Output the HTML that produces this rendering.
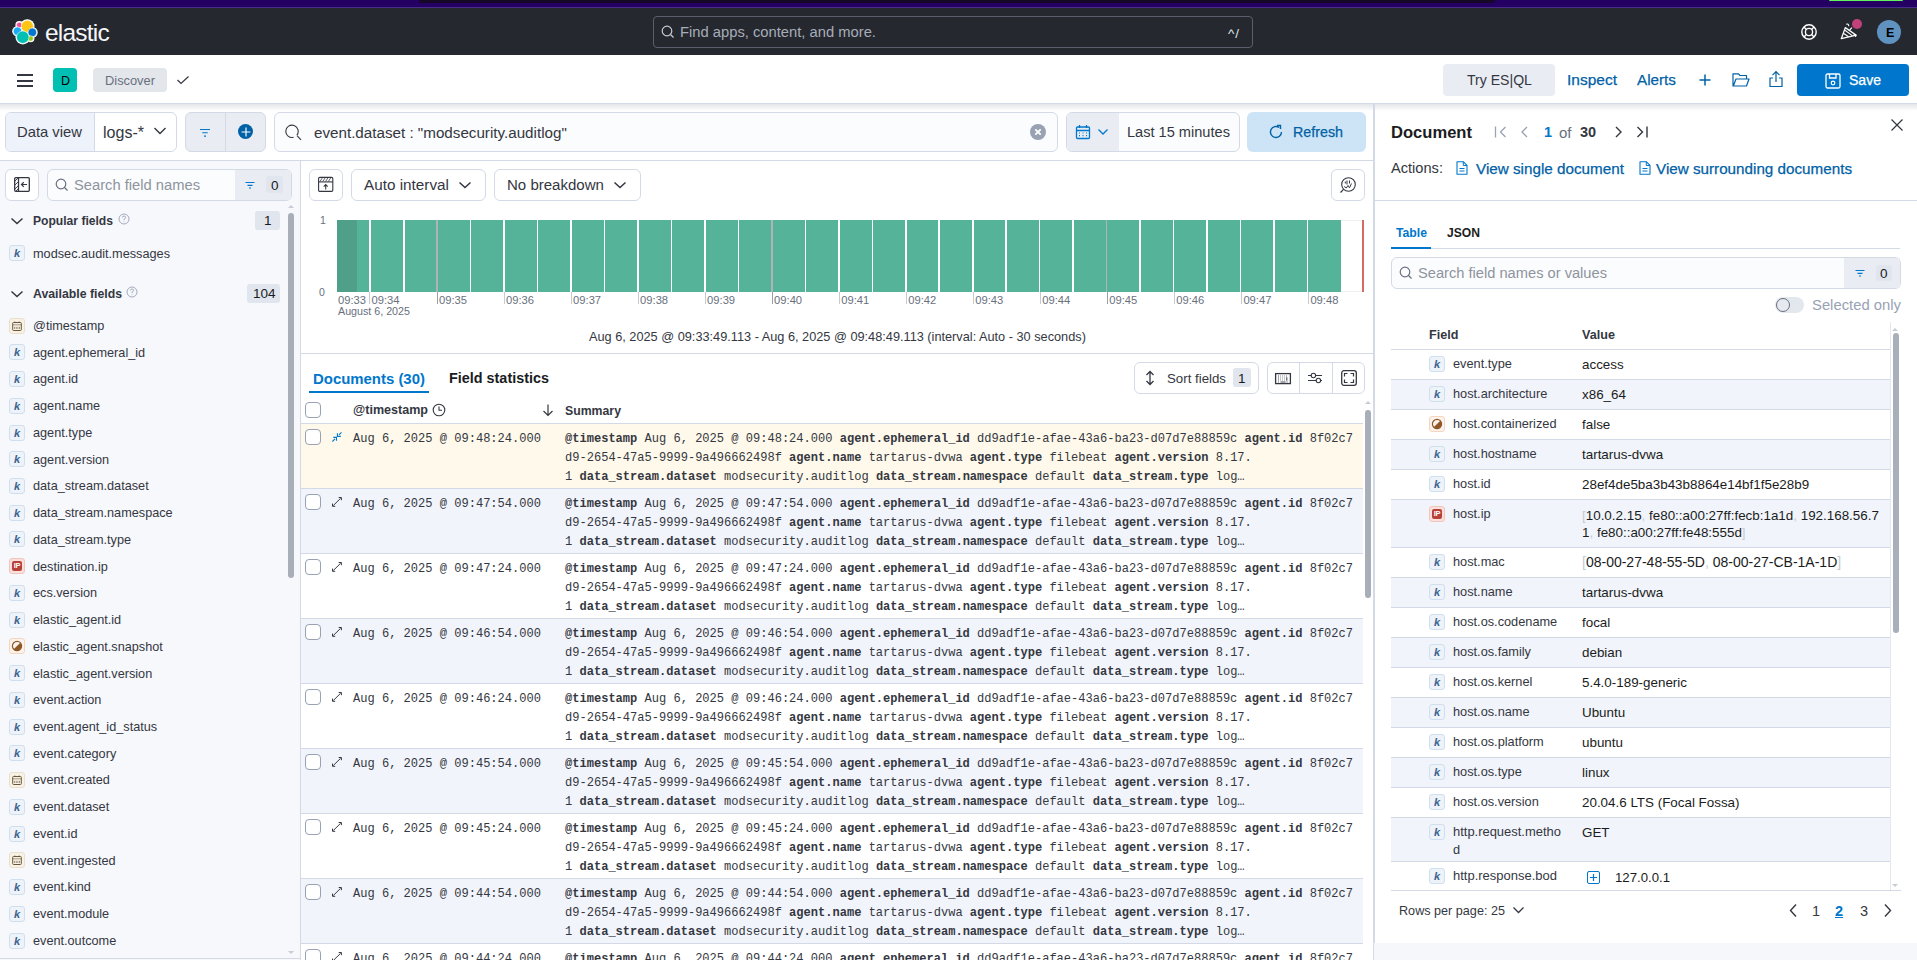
<!DOCTYPE html><html><head><meta charset="utf-8"><style>
html,body{margin:0;padding:0;width:1917px;height:960px;overflow:hidden;background:#fff;font-family:"Liberation Sans",sans-serif;}
.a{position:absolute;box-sizing:border-box;}
.t{position:absolute;white-space:pre;}
.m{font-family:"Liberation Mono",monospace;}
</style></head><body>
<div class="a" style="left:0px;top:0px;width:1917px;height:8px;background:#230062;"></div>
<div class="a" style="left:0px;top:7px;width:1917px;height:1px;background:#4a2c8c;"></div>
<div class="a" style="left:419px;top:0px;width:1076px;height:3px;background:#160827;border-radius:0 0 6px 6px;"></div>
<div class="a" style="left:1829px;top:0px;width:74px;height:1.2px;background:#5ff25c;border-radius:0 0 2px 2px;"></div>
<div class="a" style="left:0px;top:8px;width:1917px;height:47px;background:#25282f;"></div>
<svg class="a" style="left:10px;top:17px;" width="30" height="30" viewBox="0 0 30 30" fill="none"><circle cx="9.3" cy="8.0" r="3.9" fill="#fff"/><circle cx="17.3" cy="9.4" r="7.199999999999999" fill="#fff"/><circle cx="7.5" cy="14.2" r="5.300000000000001" fill="#fff"/><circle cx="22.3" cy="15.4" r="5.4" fill="#fff"/><circle cx="20.6" cy="21.5" r="3.8000000000000003" fill="#fff"/><circle cx="12.8" cy="20.2" r="7.300000000000001" fill="#fff"/><circle cx="9.3" cy="8.0" r="2.8" fill="#f04e98" stroke="#fff" stroke-width="0.6"/><circle cx="17.3" cy="9.4" r="6.1" fill="#fec514" stroke="#fff" stroke-width="0.6"/><circle cx="7.5" cy="14.2" r="4.2" fill="#1ba9f5" stroke="#fff" stroke-width="0.6"/><circle cx="22.3" cy="15.4" r="4.3" fill="#0077cc" stroke="#fff" stroke-width="0.6"/><circle cx="20.6" cy="21.5" r="2.7" fill="#93c90e" stroke="#fff" stroke-width="0.6"/><circle cx="12.8" cy="20.2" r="6.2" fill="#00bfb3" stroke="#fff" stroke-width="0.6"/></svg>
<div class="t " style="left:45px;top:18.3px;font-size:24.5px;line-height:29.4px;color:#f5f7fa;letter-spacing:-0.8px;">elastic</div>
<div class="a" style="left:653px;top:16px;width:600px;height:32px;border:1px solid #5a5f6b;border-radius:4px;background:#25282f;"></div>
<svg class="a" style="left:661px;top:25px;" width="14" height="14" viewBox="0 0 14 14" fill="none"><circle cx="6" cy="6" r="4.8" stroke="#c7ccd6" stroke-width="1.2"/><path d="M9.5 9.5L12.5 12.5" stroke="#c7ccd6" stroke-width="1.2"/></svg>
<div class="t " style="left:680px;top:24.15px;font-size:14.75px;line-height:17.7px;color:#a7adb8;">Find apps, content, and more.</div>
<div class="t " style="left:1228px;top:25.9px;font-size:13.5px;line-height:16.2px;color:#dfe3ea;letter-spacing:1px;">^/</div>
<svg class="a" style="left:1800px;top:23px;" width="18" height="18" viewBox="0 0 18 18" fill="none"><circle cx="9" cy="9" r="7.2" stroke="#fff" stroke-width="1.4"/><circle cx="9" cy="9" r="3.6" stroke="#fff" stroke-width="1.4"/><path d="M4 4L6.4 6.4M14 4L11.6 6.4M4 14L6.4 11.6M14 14L11.6 11.6" stroke="#fff" stroke-width="1.4"/></svg>
<svg class="a" style="left:1838px;top:20px;" width="22" height="22" viewBox="0 0 22 22" fill="none"><path d="M3.3 18.7L7.3 7.6L18.3 15.2Z" stroke="#fff" stroke-width="1.3" stroke-linejoin="round"/><path d="M5.4 13.2L10.6 16.8M6.6 10L14.3 15.6" stroke="#fff" stroke-width="1.1"/><path d="M8.2 4.2Q10.6 3.4 10.8 6.2M15.5 14.2Q18.2 14 17.6 17M11.6 10L14 7.6" stroke="#fff" stroke-width="1.1"/></svg>
<div class="a" style="left:1851.7px;top:18.7px;width:10.6px;height:10.6px;background:#c2417b;border-radius:50%;"></div>
<div class="a" style="left:1877px;top:20px;width:24px;height:24px;background:#6092c0;border-radius:50%;"></div>
<div class="t " style="left:1886px;top:25.5px;font-size:12.5px;line-height:15.0px;color:#000;font-weight:700;font-weight:600;">E</div>
<div class="a" style="left:0px;top:55px;width:1917px;height:49px;background:#fff;border-bottom:1px solid #d3dae6;"></div>
<div class="a" style="left:0px;top:104px;width:1917px;height:7px;background:linear-gradient(#e3e5e9,rgba(255,255,255,0));"></div>
<div class="a" style="left:17px;top:74px;width:16px;height:1.6px;background:#343741;"></div>
<div class="a" style="left:17px;top:80px;width:16px;height:1.6px;background:#343741;"></div>
<div class="a" style="left:17px;top:85px;width:16px;height:1.6px;background:#343741;"></div>
<div class="a" style="left:53px;top:68px;width:24px;height:24px;background:#00bfb3;border-radius:4px;"></div>
<div class="t " style="left:61px;top:73.5px;font-size:12.5px;line-height:15.0px;color:#000;">D</div>
<div class="a" style="left:93px;top:68px;width:74px;height:24px;background:#e3e6eb;border-radius:4px;"></div>
<div class="t " style="left:105px;top:73.29px;font-size:12.85px;line-height:15.42px;color:#69707d;">Discover</div>
<svg class="a" style="left:176px;top:75px;" width="14" height="10" viewBox="0 0 14 10" fill="none"><path d="M1.5 5L5 8.5L12.5 1.5" stroke="#343741" stroke-width="1.2"/></svg>
<div class="a" style="left:1443px;top:64px;width:112px;height:32px;background:#e9edf3;border-radius:4px;"></div>
<div class="t " style="left:1467px;top:71.75px;font-size:14.09px;line-height:16.91px;color:#343741;">Try ES|QL</div>
<div class="t " style="left:1567px;top:70.9px;font-size:15.51px;line-height:18.61px;color:#0061a6;-webkit-text-stroke:0.25px currentColor;">Inspect</div>
<div class="t " style="left:1637px;top:71.05px;font-size:15.26px;line-height:18.31px;color:#0061a6;-webkit-text-stroke:0.25px currentColor;">Alerts</div>
<svg class="a" style="left:1698px;top:73px;" width="14" height="14" viewBox="0 0 14 14" fill="none"><path d="M7 1.5V12.5M1.5 7H12.5" stroke="#0061a6" stroke-width="1.5"/></svg>
<svg class="a" style="left:1732px;top:72px;" width="18" height="16" viewBox="0 0 18 16" fill="none"><path d="M1 3.5V14H14.5L17 7H4L1.5 13.5M1 3.5V1.8H6.5L8 3.5H14.5V7" stroke="#0061a6" stroke-width="1.2" stroke-linejoin="round"/></svg>
<svg class="a" style="left:1768px;top:70px;" width="16" height="18" viewBox="0 0 16 18" fill="none"><path d="M8 12V2M4.5 5.2L8 1.6L11.5 5.2M5 8H2V16.5H14V8H11" stroke="#0061a6" stroke-width="1.2"/></svg>
<div class="a" style="left:1797px;top:64px;width:112px;height:32px;background:#0077cc;border-radius:4px;"></div>
<svg class="a" style="left:1825px;top:73px;" width="16" height="16" viewBox="0 0 16 16" fill="none"><rect x="1" y="1" width="14" height="14" rx="1.5" stroke="#fff" stroke-width="1.3"/><path d="M4.5 1V5H11V1" stroke="#fff" stroke-width="1.3"/><circle cx="8" cy="10" r="1.8" stroke="#fff" stroke-width="1.2"/></svg>
<div class="t " style="left:1849px;top:71.78px;font-size:14.04px;line-height:16.85px;color:#fff;-webkit-text-stroke:0.25px currentColor;">Save</div>
<div class="a" style="left:0px;top:104px;width:1917px;height:57px;background:transparent;"></div>
<div class="a" style="left:5px;top:112px;width:172px;height:40px;border:1px solid #d3dae6;border-radius:6px;background:#fff;overflow:hidden;"></div>
<div class="a" style="left:6px;top:113px;width:89px;height:38px;background:#eef2fa;border-right:1px solid #d3dae6;border-radius:5px 0 0 5px;"></div>
<div class="t " style="left:17px;top:124.12px;font-size:14.8px;line-height:17.76px;color:#343741;">Data view</div>
<div class="t " style="left:103px;top:123.38px;font-size:16.04px;line-height:19.25px;color:#343741;">logs-*</div>
<svg class="a" style="left:153px;top:126px;" width="14" height="10" viewBox="0 0 14 10" fill="none"><path d="M1.5 2L7 7.5L12.5 2" stroke="#343741" stroke-width="1.4"/></svg>
<div class="a" style="left:185px;top:112px;width:81px;height:40px;border:1px solid #d3dae6;border-radius:6px;background:#e9edf3;"></div>
<div class="a" style="left:225px;top:113px;width:1px;height:38px;background:#d3dae6;"></div>
<svg class="a" style="left:198px;top:124px;" width="14" height="16" viewBox="0 0 14 16" fill="none"><path d="M2 5.5H12M4.3 8.8H9.7M6 12.1H8" stroke="#0077cc" stroke-width="1.1"/></svg>
<div class="a" style="left:238px;top:124px;width:15px;height:15px;background:#0061a6;border-radius:50%;"></div>
<svg class="a" style="left:237.5px;top:123.5px;" width="16" height="16" viewBox="0 0 16 16" fill="none"><path d="M8 3.6V12.4M3.6 8H12.4" stroke="#fff" stroke-width="1.15"/></svg>
<div class="a" style="left:274px;top:112px;width:784px;height:40px;border:1px solid #d3dae6;border-radius:6px;background:#fbfcfd;"></div>
<svg class="a" style="left:285px;top:124px;" width="18" height="18" viewBox="0 0 18 18" fill="none"><path d="M11.9 11.1A6.2 6.2 0 1 0 8.6 13.3" stroke="#343741" stroke-width="1.1"/><path d="M12 11.7L16 15.8" stroke="#343741" stroke-width="1.1"/></svg>
<div class="t " style="left:314px;top:123.88px;font-size:15.2px;line-height:18.24px;color:#343741;">event.dataset : &quot;modsecurity.auditlog&quot;</div>
<div class="a" style="left:1030px;top:124px;width:16px;height:16px;background:#98a2b3;border-radius:50%;"></div>
<svg class="a" style="left:1030px;top:124px;" width="16" height="16" viewBox="0 0 16 16" fill="none"><path d="M5.3 5.3L10.7 10.7M10.7 5.3L5.3 10.7" stroke="#fff" stroke-width="1.8"/></svg>
<div class="a" style="left:1066px;top:112px;width:174px;height:40px;border:1px solid #d3dae6;border-radius:6px;background:#fbfcfd;overflow:hidden;"></div>
<div class="a" style="left:1067px;top:113px;width:52px;height:38px;background:#e9edf3;border-radius:5px 0 0 5px;"></div>
<svg class="a" style="left:1075px;top:124px;" width="16" height="16" viewBox="0 0 16 16" fill="none"><rect x="1.5" y="3" width="13" height="11.5" rx="1" stroke="#0077cc" stroke-width="1.3"/><path d="M1.5 6.5H14.5M4.5 1V4M11.5 1V4" stroke="#0077cc" stroke-width="1.3"/><path d="M4 9H5M7.5 9H8.5M11 9H12M4 11.7H5M7.5 11.7H8.5M11 11.7H12" stroke="#0077cc" stroke-width="1.2"/></svg>
<svg class="a" style="left:1097px;top:128px;" width="12" height="8" viewBox="0 0 12 8" fill="none"><path d="M1.5 1.5L6 6L10.5 1.5" stroke="#0077cc" stroke-width="1.3"/></svg>
<div class="t " style="left:1127px;top:124.25px;font-size:14.59px;line-height:17.51px;color:#343741;">Last 15 minutes</div>
<div class="a" style="left:1247px;top:112px;width:119px;height:40px;background:#cce4f5;border-radius:6px;"></div>
<svg class="a" style="left:1268px;top:124px;" width="16" height="16" viewBox="0 0 16 16" fill="none"><path d="M13.5 8A5.5 5.5 0 1 1 11.2 3.5" stroke="#0061a6" stroke-width="1.4"/><path d="M9 1.5H12.5V5" stroke="#0061a6" stroke-width="1.4"/></svg>
<div class="t " style="left:1293px;top:124.43px;font-size:14.28px;line-height:17.14px;color:#0061a6;-webkit-text-stroke:0.25px currentColor;">Refresh</div>
<div class="a" style="left:0px;top:160px;width:1374px;height:1px;background:#d3dae6;"></div>
<div class="a" style="left:0px;top:161px;width:300px;height:799px;background:#f7f8fc;"></div>
<div class="a" style="left:300px;top:161px;width:1px;height:799px;background:#d3dae6;"></div>
<div class="a" style="left:0px;top:958px;width:300px;height:1px;background:#d3dae6;"></div>
<div class="a" style="left:5px;top:169px;width:34px;height:32px;border:1px solid #d3dae6;border-radius:6px;background:#fff;"></div>
<svg class="a" style="left:14px;top:177px;" width="16" height="15" viewBox="0 0 16 15" fill="none"><rect x="0.7" y="0.7" width="14.6" height="13.6" rx="1" stroke="#343741" stroke-width="1.3"/><path d="M4.5 1V14" stroke="#343741" stroke-width="1.3"/><path d="M1 4L4 1M1 8L4.5 4.5M1 12L4.5 8.5M2 14L4.5 11.5" stroke="#343741" stroke-width="0.9"/><path d="M13 7.5H7.5M9.8 5.2L7.5 7.5L9.8 9.8" stroke="#343741" stroke-width="1.2"/></svg>
<div class="a" style="left:47px;top:169px;width:245px;height:32px;border:1px solid #d3dae6;border-radius:6px;background:#fbfcfd;overflow:hidden;"></div>
<div class="a" style="left:235px;top:170px;width:56px;height:30px;background:#e9edf3;"></div>
<svg class="a" style="left:55px;top:178px;" width="14" height="14" viewBox="0 0 14 14" fill="none"><circle cx="6" cy="6" r="4.8" stroke="#69707d" stroke-width="1.2"/><path d="M9.5 9.5L12.5 12.5" stroke="#69707d" stroke-width="1.2"/></svg>
<div class="t " style="left:74px;top:177.17px;font-size:14.72px;line-height:17.66px;color:#8e949e;">Search field names</div>
<svg class="a" style="left:244px;top:179px;" width="12" height="12" viewBox="0 0 12 12" fill="none"><path d="M1.5 3.5H10.5M3.5 6.3H8.5M5 9H7" stroke="#0077cc" stroke-width="1.2"/></svg>
<div class="a" style="left:266px;top:176px;width:17px;height:17px;background:#e0e5ee;border-radius:3px;"></div>
<div class="t " style="left:271px;top:177.9px;font-size:13.5px;line-height:16.2px;color:#1a1c21;">0</div>
<svg class="a" style="left:285px;top:202px;" width="12" height="8" viewBox="0 0 12 8" fill="none"><path d="M3 6L6 3L9 6Z" fill="#c7cdd6"/></svg>
<div class="a" style="left:288px;top:213px;width:6px;height:365px;background:#a9afb9;border-radius:3px;"></div>
<svg class="a" style="left:285px;top:949px;" width="12" height="8" viewBox="0 0 12 8" fill="none"><path d="M3 2L6 5L9 2Z" fill="#c7cdd6"/></svg>
<svg class="a" style="left:10px;top:217px;" width="14" height="8" viewBox="0 0 14 8" fill="none"><path d="M1.5 1.5L7 6.5L12.5 1.5" stroke="#343741" stroke-width="1.5"/></svg>
<div class="t " style="left:33px;top:213.74px;font-size:12.1px;line-height:14.52px;color:#343741;font-weight:700;">Popular fields</div>
<svg class="a" style="left:118px;top:213px;" width="12" height="12" viewBox="0 0 12 12" fill="none"><circle cx="6" cy="6" r="5" stroke="#98a2b3" stroke-width="0.9"/><path d="M4.4 4.6Q4.6 3 6 3Q7.6 3 7.6 4.5Q7.6 5.4 6 6.2V7.3M6 8.6V9.2" stroke="#98a2b3" stroke-width="0.9"/></svg>
<div class="a" style="left:255px;top:211px;width:25px;height:19px;background:#e0e5ee;border-radius:3px;"></div>
<div class="t " style="left:264px;top:212.9px;font-size:13.5px;line-height:16.2px;color:#1a1c21;">1</div>
<svg class="a" style="left:10px;top:290px;" width="14" height="8" viewBox="0 0 14 8" fill="none"><path d="M1.5 1.5L7 6.5L12.5 1.5" stroke="#343741" stroke-width="1.5"/></svg>
<div class="t " style="left:33px;top:286.62px;font-size:12.29px;line-height:14.75px;color:#343741;font-weight:700;">Available fields</div>
<svg class="a" style="left:126px;top:286px;" width="12" height="12" viewBox="0 0 12 12" fill="none"><circle cx="6" cy="6" r="5" stroke="#98a2b3" stroke-width="0.9"/><path d="M4.4 4.6Q4.6 3 6 3Q7.6 3 7.6 4.5Q7.6 5.4 6 6.2V7.3M6 8.6V9.2" stroke="#98a2b3" stroke-width="0.9"/></svg>
<div class="a" style="left:247px;top:284px;width:33px;height:19px;background:#e0e5ee;border-radius:3px;"></div>
<div class="t " style="left:253px;top:285.9px;font-size:13.5px;line-height:16.2px;color:#1a1c21;">104</div>
<div class="a" style="left:9px;top:245px;width:16px;height:16px;background:#eef3f9;border:1px solid #cfdfee;border-radius:3px;"></div>
<div class="t" style="left:9px;top:245px;width:16px;height:16px;line-height:16px;text-align:center;font-size:11px;font-weight:700;font-style:italic;color:#3c6390;">k</div>
<div class="t " style="left:33px;top:246.38px;font-size:12.71px;line-height:15.25px;color:#343741;">modsec.audit.messages</div>
<div class="a" style="left:9px;top:317.5px;width:16px;height:16px;background:#f7f1e6;border:1px solid #ebdfca;border-radius:3px;"></div>
<svg class="a" style="left:12px;top:320.5px;" width="10" height="10" viewBox="0 0 10 10" fill="none"><rect x="0.7" y="1.5" width="8.6" height="8" rx="0.8" stroke="#6a5638" stroke-width="1"/><path d="M0.7 3.8H9.3M2.8 0.3V2M7.2 0.3V2M2.6 5.8V8M4.3 5.8V8M5.9 5.8V8M7.5 5.8V8" stroke="#6a5638" stroke-width="0.6"/></svg>
<div class="t " style="left:33px;top:318.88px;font-size:12.7px;line-height:15.24px;color:#343741;">@timestamp</div>
<div class="a" style="left:9px;top:344.2px;width:16px;height:16px;background:#eef3f9;border:1px solid #cfdfee;border-radius:3px;"></div>
<div class="t" style="left:9px;top:344.2px;width:16px;height:16px;line-height:16px;text-align:center;font-size:11px;font-weight:700;font-style:italic;color:#3c6390;">k</div>
<div class="t " style="left:33px;top:345.62px;font-size:12.7px;line-height:15.24px;color:#343741;">agent.ephemeral_id</div>
<div class="a" style="left:9px;top:371.0px;width:16px;height:16px;background:#eef3f9;border:1px solid #cfdfee;border-radius:3px;"></div>
<div class="t" style="left:9px;top:371.0px;width:16px;height:16px;line-height:16px;text-align:center;font-size:11px;font-weight:700;font-style:italic;color:#3c6390;">k</div>
<div class="t " style="left:33px;top:372.36px;font-size:12.7px;line-height:15.24px;color:#343741;">agent.id</div>
<div class="a" style="left:9px;top:397.7px;width:16px;height:16px;background:#eef3f9;border:1px solid #cfdfee;border-radius:3px;"></div>
<div class="t" style="left:9px;top:397.7px;width:16px;height:16px;line-height:16px;text-align:center;font-size:11px;font-weight:700;font-style:italic;color:#3c6390;">k</div>
<div class="t " style="left:33px;top:399.1px;font-size:12.7px;line-height:15.24px;color:#343741;">agent.name</div>
<div class="a" style="left:9px;top:424.5px;width:16px;height:16px;background:#eef3f9;border:1px solid #cfdfee;border-radius:3px;"></div>
<div class="t" style="left:9px;top:424.5px;width:16px;height:16px;line-height:16px;text-align:center;font-size:11px;font-weight:700;font-style:italic;color:#3c6390;">k</div>
<div class="t " style="left:33px;top:425.84px;font-size:12.7px;line-height:15.24px;color:#343741;">agent.type</div>
<div class="a" style="left:9px;top:451.2px;width:16px;height:16px;background:#eef3f9;border:1px solid #cfdfee;border-radius:3px;"></div>
<div class="t" style="left:9px;top:451.2px;width:16px;height:16px;line-height:16px;text-align:center;font-size:11px;font-weight:700;font-style:italic;color:#3c6390;">k</div>
<div class="t " style="left:33px;top:452.58px;font-size:12.7px;line-height:15.24px;color:#343741;">agent.version</div>
<div class="a" style="left:9px;top:477.9px;width:16px;height:16px;background:#eef3f9;border:1px solid #cfdfee;border-radius:3px;"></div>
<div class="t" style="left:9px;top:477.9px;width:16px;height:16px;line-height:16px;text-align:center;font-size:11px;font-weight:700;font-style:italic;color:#3c6390;">k</div>
<div class="t " style="left:33px;top:479.32px;font-size:12.7px;line-height:15.24px;color:#343741;">data_stream.dataset</div>
<div class="a" style="left:9px;top:504.7px;width:16px;height:16px;background:#eef3f9;border:1px solid #cfdfee;border-radius:3px;"></div>
<div class="t" style="left:9px;top:504.7px;width:16px;height:16px;line-height:16px;text-align:center;font-size:11px;font-weight:700;font-style:italic;color:#3c6390;">k</div>
<div class="t " style="left:33px;top:506.06px;font-size:12.7px;line-height:15.24px;color:#343741;">data_stream.namespace</div>
<div class="a" style="left:9px;top:531.4px;width:16px;height:16px;background:#eef3f9;border:1px solid #cfdfee;border-radius:3px;"></div>
<div class="t" style="left:9px;top:531.4px;width:16px;height:16px;line-height:16px;text-align:center;font-size:11px;font-weight:700;font-style:italic;color:#3c6390;">k</div>
<div class="t " style="left:33px;top:532.8px;font-size:12.7px;line-height:15.24px;color:#343741;">data_stream.type</div>
<div class="a" style="left:9px;top:558.2px;width:16px;height:16px;background:#fbe0dc;border:1px solid #f3c4bd;border-radius:3px;"></div>
<div class="a" style="left:12px;top:561.2px;width:10px;height:10px;background:#b8423a;border-radius:2px;"></div>
<div class="t" style="left:12px;top:561.2px;width:10px;height:10px;line-height:10px;text-align:center;font-size:7.5px;font-weight:700;color:#fff;letter-spacing:-0.3px;">IP</div>
<div class="t " style="left:33px;top:559.54px;font-size:12.7px;line-height:15.24px;color:#343741;">destination.ip</div>
<div class="a" style="left:9px;top:584.9px;width:16px;height:16px;background:#eef3f9;border:1px solid #cfdfee;border-radius:3px;"></div>
<div class="t" style="left:9px;top:584.9px;width:16px;height:16px;line-height:16px;text-align:center;font-size:11px;font-weight:700;font-style:italic;color:#3c6390;">k</div>
<div class="t " style="left:33px;top:586.28px;font-size:12.7px;line-height:15.24px;color:#343741;">ecs.version</div>
<div class="a" style="left:9px;top:611.6px;width:16px;height:16px;background:#eef3f9;border:1px solid #cfdfee;border-radius:3px;"></div>
<div class="t" style="left:9px;top:611.6px;width:16px;height:16px;line-height:16px;text-align:center;font-size:11px;font-weight:700;font-style:italic;color:#3c6390;">k</div>
<div class="t " style="left:33px;top:613.02px;font-size:12.7px;line-height:15.24px;color:#343741;">elastic_agent.id</div>
<div class="a" style="left:9px;top:638.4px;width:16px;height:16px;background:#fdf3ec;border:1px solid #f5d5bd;border-radius:3px;"></div>
<svg class="a" style="left:11px;top:640.4px;" width="12" height="12" viewBox="0 0 12 12" fill="none"><circle cx="6" cy="6" r="4.6" stroke="#8f5726" stroke-width="1.2"/><path d="M9.3 2.7A4.6 4.6 0 0 1 2.7 9.3Z" fill="#8f5726"/></svg>
<div class="t " style="left:33px;top:639.76px;font-size:12.7px;line-height:15.24px;color:#343741;">elastic_agent.snapshot</div>
<div class="a" style="left:9px;top:665.1px;width:16px;height:16px;background:#eef3f9;border:1px solid #cfdfee;border-radius:3px;"></div>
<div class="t" style="left:9px;top:665.1px;width:16px;height:16px;line-height:16px;text-align:center;font-size:11px;font-weight:700;font-style:italic;color:#3c6390;">k</div>
<div class="t " style="left:33px;top:666.5px;font-size:12.7px;line-height:15.24px;color:#343741;">elastic_agent.version</div>
<div class="a" style="left:9px;top:691.9px;width:16px;height:16px;background:#eef3f9;border:1px solid #cfdfee;border-radius:3px;"></div>
<div class="t" style="left:9px;top:691.9px;width:16px;height:16px;line-height:16px;text-align:center;font-size:11px;font-weight:700;font-style:italic;color:#3c6390;">k</div>
<div class="t " style="left:33px;top:693.24px;font-size:12.7px;line-height:15.24px;color:#343741;">event.action</div>
<div class="a" style="left:9px;top:718.6px;width:16px;height:16px;background:#eef3f9;border:1px solid #cfdfee;border-radius:3px;"></div>
<div class="t" style="left:9px;top:718.6px;width:16px;height:16px;line-height:16px;text-align:center;font-size:11px;font-weight:700;font-style:italic;color:#3c6390;">k</div>
<div class="t " style="left:33px;top:719.98px;font-size:12.7px;line-height:15.24px;color:#343741;">event.agent_id_status</div>
<div class="a" style="left:9px;top:745.3px;width:16px;height:16px;background:#eef3f9;border:1px solid #cfdfee;border-radius:3px;"></div>
<div class="t" style="left:9px;top:745.3px;width:16px;height:16px;line-height:16px;text-align:center;font-size:11px;font-weight:700;font-style:italic;color:#3c6390;">k</div>
<div class="t " style="left:33px;top:746.72px;font-size:12.7px;line-height:15.24px;color:#343741;">event.category</div>
<div class="a" style="left:9px;top:772.1px;width:16px;height:16px;background:#f7f1e6;border:1px solid #ebdfca;border-radius:3px;"></div>
<svg class="a" style="left:12px;top:775.1px;" width="10" height="10" viewBox="0 0 10 10" fill="none"><rect x="0.7" y="1.5" width="8.6" height="8" rx="0.8" stroke="#6a5638" stroke-width="1"/><path d="M0.7 3.8H9.3M2.8 0.3V2M7.2 0.3V2M2.6 5.8V8M4.3 5.8V8M5.9 5.8V8M7.5 5.8V8" stroke="#6a5638" stroke-width="0.6"/></svg>
<div class="t " style="left:33px;top:773.46px;font-size:12.7px;line-height:15.24px;color:#343741;">event.created</div>
<div class="a" style="left:9px;top:798.8px;width:16px;height:16px;background:#eef3f9;border:1px solid #cfdfee;border-radius:3px;"></div>
<div class="t" style="left:9px;top:798.8px;width:16px;height:16px;line-height:16px;text-align:center;font-size:11px;font-weight:700;font-style:italic;color:#3c6390;">k</div>
<div class="t " style="left:33px;top:800.2px;font-size:12.7px;line-height:15.24px;color:#343741;">event.dataset</div>
<div class="a" style="left:9px;top:825.6px;width:16px;height:16px;background:#eef3f9;border:1px solid #cfdfee;border-radius:3px;"></div>
<div class="t" style="left:9px;top:825.6px;width:16px;height:16px;line-height:16px;text-align:center;font-size:11px;font-weight:700;font-style:italic;color:#3c6390;">k</div>
<div class="t " style="left:33px;top:826.94px;font-size:12.7px;line-height:15.24px;color:#343741;">event.id</div>
<div class="a" style="left:9px;top:852.3px;width:16px;height:16px;background:#f7f1e6;border:1px solid #ebdfca;border-radius:3px;"></div>
<svg class="a" style="left:12px;top:855.3px;" width="10" height="10" viewBox="0 0 10 10" fill="none"><rect x="0.7" y="1.5" width="8.6" height="8" rx="0.8" stroke="#6a5638" stroke-width="1"/><path d="M0.7 3.8H9.3M2.8 0.3V2M7.2 0.3V2M2.6 5.8V8M4.3 5.8V8M5.9 5.8V8M7.5 5.8V8" stroke="#6a5638" stroke-width="0.6"/></svg>
<div class="t " style="left:33px;top:853.68px;font-size:12.7px;line-height:15.24px;color:#343741;">event.ingested</div>
<div class="a" style="left:9px;top:879.0px;width:16px;height:16px;background:#eef3f9;border:1px solid #cfdfee;border-radius:3px;"></div>
<div class="t" style="left:9px;top:879.0px;width:16px;height:16px;line-height:16px;text-align:center;font-size:11px;font-weight:700;font-style:italic;color:#3c6390;">k</div>
<div class="t " style="left:33px;top:880.42px;font-size:12.7px;line-height:15.24px;color:#343741;">event.kind</div>
<div class="a" style="left:9px;top:905.8px;width:16px;height:16px;background:#eef3f9;border:1px solid #cfdfee;border-radius:3px;"></div>
<div class="t" style="left:9px;top:905.8px;width:16px;height:16px;line-height:16px;text-align:center;font-size:11px;font-weight:700;font-style:italic;color:#3c6390;">k</div>
<div class="t " style="left:33px;top:907.16px;font-size:12.7px;line-height:15.24px;color:#343741;">event.module</div>
<div class="a" style="left:9px;top:932.5px;width:16px;height:16px;background:#eef3f9;border:1px solid #cfdfee;border-radius:3px;"></div>
<div class="t" style="left:9px;top:932.5px;width:16px;height:16px;line-height:16px;text-align:center;font-size:11px;font-weight:700;font-style:italic;color:#3c6390;">k</div>
<div class="t " style="left:33px;top:933.9px;font-size:12.7px;line-height:15.24px;color:#343741;">event.outcome</div>
<div class="a" style="left:309px;top:169px;width:34px;height:32px;border:1px solid #d3dae6;border-radius:6px;background:#fff;"></div>
<svg class="a" style="left:317px;top:176px;" width="17" height="17" viewBox="0 0 17 17" fill="none"><rect x="1.6" y="1.4" width="14.2" height="14" rx="1.2" stroke="#343741" stroke-width="1.1"/><path d="M1.6 5.9H15.8" stroke="#343741" stroke-width="1.1"/><path d="M3 5.4L5.4 1.8M5.8 5.4L8.2 1.8M8.6 5.4L11 1.8M11.4 5.4L13.8 1.8" stroke="#343741" stroke-width="0.8"/><path d="M8.7 13.6V8.6M6.7 10.6L8.7 8.6L10.7 10.6" stroke="#343741" stroke-width="1.05"/></svg>
<div class="a" style="left:351px;top:169px;width:135px;height:32px;border:1px solid #d3dae6;border-radius:6px;background:#fff;"></div>
<div class="t " style="left:364px;top:175.82px;font-size:15.29px;line-height:18.35px;color:#343741;">Auto interval</div>
<svg class="a" style="left:458px;top:181px;" width="14" height="8" viewBox="0 0 14 8" fill="none"><path d="M1.5 1.5L7 6.5L12.5 1.5" stroke="#343741" stroke-width="1.5"/></svg>
<div class="a" style="left:494px;top:169px;width:147px;height:32px;border:1px solid #d3dae6;border-radius:6px;background:#fff;"></div>
<div class="t " style="left:507px;top:175.97px;font-size:15.04px;line-height:18.05px;color:#343741;">No breakdown</div>
<svg class="a" style="left:613px;top:181px;" width="14" height="8" viewBox="0 0 14 8" fill="none"><path d="M1.5 1.5L7 6.5L12.5 1.5" stroke="#343741" stroke-width="1.5"/></svg>
<div class="a" style="left:1331px;top:169px;width:34px;height:32px;border:1px solid #d3dae6;border-radius:6px;background:#fff;"></div>
<svg class="a" style="left:1339px;top:176px;" width="18" height="18" viewBox="0 0 18 18" fill="none"><circle cx="9.5" cy="8.5" r="6.8" stroke="#343741" stroke-width="1.1"/><path d="M5.2 10.5L7.3 12L9 9.5L10.5 11.8L12.5 7.5M8 4.5V8.5M10.5 4.5V7.5M6.3 5.5V7.5" stroke="#343741" stroke-width="1"/><path d="M4.5 13.3L1.5 16.5" stroke="#343741" stroke-width="1.2"/></svg>
<div class="t " style="left:320px;top:213.7px;font-size:10.5px;line-height:12.6px;color:#69707d;">1</div>
<div class="t " style="left:319px;top:285.7px;font-size:10.5px;line-height:12.6px;color:#69707d;">0</div>
<div class="a" style="left:337px;top:220px;width:1004px;height:72px;background:#54b399;"></div>
<div class="a" style="left:337px;top:220px;width:20px;height:72px;background:#4f9f89;"></div>
<div class="a" style="left:369.47px;top:220px;width:1.6px;height:72px;background:#fff;"></div>
<div class="a" style="left:402.94px;top:220px;width:1.6px;height:72px;background:#fff;"></div>
<div class="a" style="left:436.41px;top:220px;width:1.6px;height:72px;background:#b0b3b8;"></div>
<div class="a" style="left:469.88px;top:220px;width:1.6px;height:72px;background:#fff;"></div>
<div class="a" style="left:503.35px;top:220px;width:1.6px;height:72px;background:#fff;"></div>
<div class="a" style="left:536.82px;top:220px;width:1.6px;height:72px;background:#fff;"></div>
<div class="a" style="left:570.29px;top:220px;width:1.6px;height:72px;background:#fff;"></div>
<div class="a" style="left:603.76px;top:220px;width:1.6px;height:72px;background:#fff;"></div>
<div class="a" style="left:637.23px;top:220px;width:1.6px;height:72px;background:#fff;"></div>
<div class="a" style="left:670.7px;top:220px;width:1.6px;height:72px;background:#fff;"></div>
<div class="a" style="left:704.17px;top:220px;width:1.6px;height:72px;background:#fff;"></div>
<div class="a" style="left:737.64px;top:220px;width:1.6px;height:72px;background:#fff;"></div>
<div class="a" style="left:771.11px;top:220px;width:1.6px;height:72px;background:#b0b3b8;"></div>
<div class="a" style="left:804.58px;top:220px;width:1.6px;height:72px;background:#fff;"></div>
<div class="a" style="left:838.05px;top:220px;width:1.6px;height:72px;background:#fff;"></div>
<div class="a" style="left:871.52px;top:220px;width:1.6px;height:72px;background:#fff;"></div>
<div class="a" style="left:904.99px;top:220px;width:1.6px;height:72px;background:#fff;"></div>
<div class="a" style="left:938.46px;top:220px;width:1.6px;height:72px;background:#fff;"></div>
<div class="a" style="left:971.93px;top:220px;width:1.6px;height:72px;background:#fff;"></div>
<div class="a" style="left:1005.4px;top:220px;width:1.6px;height:72px;background:#fff;"></div>
<div class="a" style="left:1038.87px;top:220px;width:1.6px;height:72px;background:#fff;"></div>
<div class="a" style="left:1072.34px;top:220px;width:1.6px;height:72px;background:#fff;"></div>
<div class="a" style="left:1105.81px;top:220px;width:1.6px;height:72px;background:#b0b3b8;"></div>
<div class="a" style="left:1139.28px;top:220px;width:1.6px;height:72px;background:#fff;"></div>
<div class="a" style="left:1172.75px;top:220px;width:1.6px;height:72px;background:#fff;"></div>
<div class="a" style="left:1206.22px;top:220px;width:1.6px;height:72px;background:#fff;"></div>
<div class="a" style="left:1239.69px;top:220px;width:1.6px;height:72px;background:#fff;"></div>
<div class="a" style="left:1273.16px;top:220px;width:1.6px;height:72px;background:#fff;"></div>
<div class="a" style="left:1306.63px;top:220px;width:1.6px;height:72px;background:#fff;"></div>
<div class="a" style="left:1341px;top:220px;width:22px;height:1px;background:#eef0f3;"></div>
<div class="a" style="left:1341px;top:291px;width:22px;height:1px;background:#eef0f3;"></div>
<div class="a" style="left:1362px;top:220px;width:2px;height:72px;background:#d36b64;"></div>
<div class="t " style="left:338px;top:294.29px;font-size:11.19px;line-height:13.43px;color:#69707d;">09:33</div>
<div class="a" style="left:369.0px;top:292px;width:1px;height:12px;background:#c5cad3;"></div>
<div class="t " style="left:371.5px;top:294.29px;font-size:11.19px;line-height:13.43px;color:#69707d;">09:34</div>
<div class="a" style="left:436.5px;top:292px;width:1px;height:12px;background:#9aa0a8;"></div>
<div class="t " style="left:439.0px;top:294.29px;font-size:11.19px;line-height:13.43px;color:#69707d;">09:35</div>
<div class="a" style="left:503.5px;top:292px;width:1px;height:12px;background:#c5cad3;"></div>
<div class="t " style="left:506.0px;top:294.29px;font-size:11.19px;line-height:13.43px;color:#69707d;">09:36</div>
<div class="a" style="left:570.6px;top:292px;width:1px;height:12px;background:#c5cad3;"></div>
<div class="t " style="left:573.1px;top:294.29px;font-size:11.19px;line-height:13.43px;color:#69707d;">09:37</div>
<div class="a" style="left:637.6px;top:292px;width:1px;height:12px;background:#c5cad3;"></div>
<div class="t " style="left:640.1px;top:294.29px;font-size:11.19px;line-height:13.43px;color:#69707d;">09:38</div>
<div class="a" style="left:704.6px;top:292px;width:1px;height:12px;background:#c5cad3;"></div>
<div class="t " style="left:707.1px;top:294.29px;font-size:11.19px;line-height:13.43px;color:#69707d;">09:39</div>
<div class="a" style="left:771.6px;top:292px;width:1px;height:12px;background:#9aa0a8;"></div>
<div class="t " style="left:774.1px;top:294.29px;font-size:11.19px;line-height:13.43px;color:#69707d;">09:40</div>
<div class="a" style="left:838.7px;top:292px;width:1px;height:12px;background:#c5cad3;"></div>
<div class="t " style="left:841.2px;top:294.29px;font-size:11.19px;line-height:13.43px;color:#69707d;">09:41</div>
<div class="a" style="left:905.7px;top:292px;width:1px;height:12px;background:#c5cad3;"></div>
<div class="t " style="left:908.2px;top:294.29px;font-size:11.19px;line-height:13.43px;color:#69707d;">09:42</div>
<div class="a" style="left:972.7px;top:292px;width:1px;height:12px;background:#c5cad3;"></div>
<div class="t " style="left:975.2px;top:294.29px;font-size:11.19px;line-height:13.43px;color:#69707d;">09:43</div>
<div class="a" style="left:1039.8px;top:292px;width:1px;height:12px;background:#c5cad3;"></div>
<div class="t " style="left:1042.3px;top:294.29px;font-size:11.19px;line-height:13.43px;color:#69707d;">09:44</div>
<div class="a" style="left:1106.8px;top:292px;width:1px;height:12px;background:#9aa0a8;"></div>
<div class="t " style="left:1109.3px;top:294.29px;font-size:11.19px;line-height:13.43px;color:#69707d;">09:45</div>
<div class="a" style="left:1173.8px;top:292px;width:1px;height:12px;background:#c5cad3;"></div>
<div class="t " style="left:1176.3px;top:294.29px;font-size:11.19px;line-height:13.43px;color:#69707d;">09:46</div>
<div class="a" style="left:1240.9px;top:292px;width:1px;height:12px;background:#c5cad3;"></div>
<div class="t " style="left:1243.4px;top:294.29px;font-size:11.19px;line-height:13.43px;color:#69707d;">09:47</div>
<div class="a" style="left:1307.9px;top:292px;width:1px;height:12px;background:#c5cad3;"></div>
<div class="t " style="left:1310.4px;top:294.29px;font-size:11.19px;line-height:13.43px;color:#69707d;">09:48</div>
<div class="t " style="left:338px;top:304.58px;font-size:10.7px;line-height:12.84px;color:#69707d;">August 6, 2025</div>
<div class="t " style="left:589px;top:329.36px;font-size:12.74px;line-height:15.29px;color:#343741;">Aug 6, 2025 @ 09:33:49.113 - Aug 6, 2025 @ 09:48:49.113 (interval: Auto - 30 seconds)</div>
<div class="a" style="left:301px;top:353px;width:1073px;height:1px;background:#d3dae6;"></div>
<div class="t " style="left:313px;top:370.04px;font-size:14.93px;line-height:17.92px;color:#0077cc;font-weight:700;">Documents (30)</div>
<div class="a" style="left:309px;top:391px;width:120px;height:2px;background:#0077cc;"></div>
<div class="t " style="left:449px;top:370.36px;font-size:14.4px;line-height:17.28px;color:#1a1c21;font-weight:700;">Field statistics</div>
<div class="a" style="left:1134px;top:362px;width:125px;height:32px;border:1px solid #d3dae6;border-radius:6px;background:#fff;"></div>
<svg class="a" style="left:1143px;top:370px;" width="14" height="16" viewBox="0 0 14 16" fill="none"><path d="M7 2V14M3.5 5L7 1.5L10.5 5M3.5 11L7 14.5L10.5 11" stroke="#343741" stroke-width="1.3"/></svg>
<div class="t " style="left:1167px;top:371.04px;font-size:13.27px;line-height:15.92px;color:#343741;">Sort fields</div>
<div class="a" style="left:1233px;top:368px;width:18px;height:19px;background:#e0e5ee;border-radius:3px;"></div>
<div class="t " style="left:1238px;top:370.9px;font-size:13.5px;line-height:16.2px;color:#1a1c21;">1</div>
<div class="a" style="left:1267px;top:362px;width:98px;height:32px;border:1px solid #d3dae6;border-radius:6px;background:#fff;"></div>
<div class="a" style="left:1299px;top:363px;width:1px;height:30px;background:#d3dae6;"></div>
<div class="a" style="left:1332px;top:363px;width:1px;height:30px;background:#d3dae6;"></div>
<svg class="a" style="left:1274px;top:372px;" width="18" height="13" viewBox="0 0 18 13" fill="none"><rect x="1.6" y="1.6" width="14.8" height="10" stroke="#343741" stroke-width="1.3"/><path d="M4 4H5M6.2 4H6.8M8.2 4H8.8M10.2 4H10.8M12.2 4H13M4 6H5M6.2 6H6.8M8.2 6H8.8M10.2 6H10.8M4 8H5M6.2 8H6.8M8.2 8H8.8M10.2 8H10.8M4.2 10H5M6.5 10H11.5M12.5 10H13.5" stroke="#343741" stroke-width="0.9"/><rect x="12.3" y="5.2" width="1" height="3.5" fill="#343741"/></svg>
<svg class="a" style="left:1307px;top:370px;" width="18" height="16" viewBox="0 0 18 16" fill="none"><path d="M1 5.5H15M1 10.5H15" stroke="#343741" stroke-width="1.1"/><circle cx="6.4" cy="5.5" r="2.2" fill="#fff" stroke="#343741" stroke-width="1.1"/><circle cx="11.4" cy="10.5" r="2.2" fill="#fff" stroke="#343741" stroke-width="1.1"/></svg>
<svg class="a" style="left:1340px;top:369px;" width="18" height="18" viewBox="0 0 18 18" fill="none"><rect x="1.7" y="1.7" width="14.6" height="14.6" rx="2.2" stroke="#343741" stroke-width="1.3"/><path d="M4.5 7.5V4.5H7.5M10.5 4.5H13.5V7.5M13.5 10.5V13.5H10.5M7.5 13.5H4.5V10.5" stroke="#343741" stroke-width="1.2"/></svg>
<div class="a" style="left:305px;top:402px;width:16px;height:16px;border:1px solid #98a2b3;border-radius:4px;background:#fff;"></div>
<div class="t " style="left:353px;top:403.47px;font-size:12.55px;line-height:15.06px;color:#343741;font-weight:700;">@timestamp</div>
<svg class="a" style="left:432px;top:403px;" width="14" height="14" viewBox="0 0 14 14" fill="none"><circle cx="7" cy="7" r="5.8" stroke="#343741" stroke-width="1.1"/><path d="M7 3.5V7.2H10" stroke="#343741" stroke-width="1.1"/></svg>
<svg class="a" style="left:542px;top:403px;" width="12" height="14" viewBox="0 0 12 14" fill="none"><path d="M6 1.5V12.5M1.5 8L6 12.5L10.5 8" stroke="#343741" stroke-width="1.2"/></svg>
<div class="t " style="left:565px;top:403.62px;font-size:12.29px;line-height:14.75px;color:#343741;font-weight:700;">Summary</div>
<div class="a" style="left:301px;top:423px;width:1062px;height:1px;background:#d3dae6;"></div>
<div class="a" style="left:301px;top:424px;width:1062px;height:64px;background:#fef9ea;"></div>
<div class="a" style="left:301px;top:488px;width:1062px;height:1px;background:#d3dae6;"></div>
<div class="a" style="left:305px;top:429px;width:16px;height:16px;border:1px solid #98a2b3;border-radius:4px;background:#fff;"></div>
<svg class="a" style="left:330px;top:430px;" width="14" height="14" viewBox="0 0 14 14" fill="none"><path d="M11.5 2.4L9 4.9M7.4 3.2V6.4H10.8M2.4 11.5L5 8.9M3.3 7.4H6.5V10.8" stroke="#0077cc" stroke-width="1.1"/></svg>
<div class="t m" style="left:353px;top:429.5px;font-size:12.05px;line-height:19px;color:#343741;">Aug 6, 2025 @ 09:48:24.000</div>
<div class="t m" style="left:565px;top:429.5px;font-size:12.05px;line-height:19px;color:#343741;"><b>@timestamp</b> Aug 6, 2025 @ 09:48:24.000 <b>agent.ephemeral_id</b> dd9adf1e-afae-43a6-ba23-d07d7e88859c <b>agent.id</b> 8f02c7</div>
<div class="t m" style="left:565px;top:448.5px;font-size:12.05px;line-height:19px;color:#343741;">d9-2654-47a5-9999-9a496662498f <b>agent.name</b> tartarus-dvwa <b>agent.type</b> filebeat <b>agent.version</b> 8.17.</div>
<div class="t m" style="left:565px;top:467.5px;font-size:12.05px;line-height:19px;color:#343741;">1 <b>data_stream.dataset</b> modsecurity.auditlog <b>data_stream.namespace</b> default <b>data_stream.type</b> log…</div>
<div class="a" style="left:301px;top:489px;width:1062px;height:64px;background:#f1f4fa;"></div>
<div class="a" style="left:301px;top:553px;width:1062px;height:1px;background:#d3dae6;"></div>
<div class="a" style="left:305px;top:494px;width:16px;height:16px;border:1px solid #98a2b3;border-radius:4px;background:#fff;"></div>
<svg class="a" style="left:330px;top:496px;" width="14" height="14" viewBox="0 0 14 14" fill="none"><path d="M3.3 9.5L10.6 2.3M8.7 1.5H11.4V4.2M2.5 7.6V10.3H5.2" stroke="#343741" stroke-width="1"/></svg>
<div class="t m" style="left:353px;top:494.5px;font-size:12.05px;line-height:19px;color:#343741;">Aug 6, 2025 @ 09:47:54.000</div>
<div class="t m" style="left:565px;top:494.5px;font-size:12.05px;line-height:19px;color:#343741;"><b>@timestamp</b> Aug 6, 2025 @ 09:47:54.000 <b>agent.ephemeral_id</b> dd9adf1e-afae-43a6-ba23-d07d7e88859c <b>agent.id</b> 8f02c7</div>
<div class="t m" style="left:565px;top:513.5px;font-size:12.05px;line-height:19px;color:#343741;">d9-2654-47a5-9999-9a496662498f <b>agent.name</b> tartarus-dvwa <b>agent.type</b> filebeat <b>agent.version</b> 8.17.</div>
<div class="t m" style="left:565px;top:532.5px;font-size:12.05px;line-height:19px;color:#343741;">1 <b>data_stream.dataset</b> modsecurity.auditlog <b>data_stream.namespace</b> default <b>data_stream.type</b> log…</div>
<div class="a" style="left:301px;top:554px;width:1062px;height:64px;background:#fff;"></div>
<div class="a" style="left:301px;top:618px;width:1062px;height:1px;background:#d3dae6;"></div>
<div class="a" style="left:305px;top:559px;width:16px;height:16px;border:1px solid #98a2b3;border-radius:4px;background:#fff;"></div>
<svg class="a" style="left:330px;top:561px;" width="14" height="14" viewBox="0 0 14 14" fill="none"><path d="M3.3 9.5L10.6 2.3M8.7 1.5H11.4V4.2M2.5 7.6V10.3H5.2" stroke="#343741" stroke-width="1"/></svg>
<div class="t m" style="left:353px;top:559.5px;font-size:12.05px;line-height:19px;color:#343741;">Aug 6, 2025 @ 09:47:24.000</div>
<div class="t m" style="left:565px;top:559.5px;font-size:12.05px;line-height:19px;color:#343741;"><b>@timestamp</b> Aug 6, 2025 @ 09:47:24.000 <b>agent.ephemeral_id</b> dd9adf1e-afae-43a6-ba23-d07d7e88859c <b>agent.id</b> 8f02c7</div>
<div class="t m" style="left:565px;top:578.5px;font-size:12.05px;line-height:19px;color:#343741;">d9-2654-47a5-9999-9a496662498f <b>agent.name</b> tartarus-dvwa <b>agent.type</b> filebeat <b>agent.version</b> 8.17.</div>
<div class="t m" style="left:565px;top:597.5px;font-size:12.05px;line-height:19px;color:#343741;">1 <b>data_stream.dataset</b> modsecurity.auditlog <b>data_stream.namespace</b> default <b>data_stream.type</b> log…</div>
<div class="a" style="left:301px;top:619px;width:1062px;height:64px;background:#f1f4fa;"></div>
<div class="a" style="left:301px;top:683px;width:1062px;height:1px;background:#d3dae6;"></div>
<div class="a" style="left:305px;top:624px;width:16px;height:16px;border:1px solid #98a2b3;border-radius:4px;background:#fff;"></div>
<svg class="a" style="left:330px;top:626px;" width="14" height="14" viewBox="0 0 14 14" fill="none"><path d="M3.3 9.5L10.6 2.3M8.7 1.5H11.4V4.2M2.5 7.6V10.3H5.2" stroke="#343741" stroke-width="1"/></svg>
<div class="t m" style="left:353px;top:624.5px;font-size:12.05px;line-height:19px;color:#343741;">Aug 6, 2025 @ 09:46:54.000</div>
<div class="t m" style="left:565px;top:624.5px;font-size:12.05px;line-height:19px;color:#343741;"><b>@timestamp</b> Aug 6, 2025 @ 09:46:54.000 <b>agent.ephemeral_id</b> dd9adf1e-afae-43a6-ba23-d07d7e88859c <b>agent.id</b> 8f02c7</div>
<div class="t m" style="left:565px;top:643.5px;font-size:12.05px;line-height:19px;color:#343741;">d9-2654-47a5-9999-9a496662498f <b>agent.name</b> tartarus-dvwa <b>agent.type</b> filebeat <b>agent.version</b> 8.17.</div>
<div class="t m" style="left:565px;top:662.5px;font-size:12.05px;line-height:19px;color:#343741;">1 <b>data_stream.dataset</b> modsecurity.auditlog <b>data_stream.namespace</b> default <b>data_stream.type</b> log…</div>
<div class="a" style="left:301px;top:684px;width:1062px;height:64px;background:#fff;"></div>
<div class="a" style="left:301px;top:748px;width:1062px;height:1px;background:#d3dae6;"></div>
<div class="a" style="left:305px;top:689px;width:16px;height:16px;border:1px solid #98a2b3;border-radius:4px;background:#fff;"></div>
<svg class="a" style="left:330px;top:691px;" width="14" height="14" viewBox="0 0 14 14" fill="none"><path d="M3.3 9.5L10.6 2.3M8.7 1.5H11.4V4.2M2.5 7.6V10.3H5.2" stroke="#343741" stroke-width="1"/></svg>
<div class="t m" style="left:353px;top:689.5px;font-size:12.05px;line-height:19px;color:#343741;">Aug 6, 2025 @ 09:46:24.000</div>
<div class="t m" style="left:565px;top:689.5px;font-size:12.05px;line-height:19px;color:#343741;"><b>@timestamp</b> Aug 6, 2025 @ 09:46:24.000 <b>agent.ephemeral_id</b> dd9adf1e-afae-43a6-ba23-d07d7e88859c <b>agent.id</b> 8f02c7</div>
<div class="t m" style="left:565px;top:708.5px;font-size:12.05px;line-height:19px;color:#343741;">d9-2654-47a5-9999-9a496662498f <b>agent.name</b> tartarus-dvwa <b>agent.type</b> filebeat <b>agent.version</b> 8.17.</div>
<div class="t m" style="left:565px;top:727.5px;font-size:12.05px;line-height:19px;color:#343741;">1 <b>data_stream.dataset</b> modsecurity.auditlog <b>data_stream.namespace</b> default <b>data_stream.type</b> log…</div>
<div class="a" style="left:301px;top:749px;width:1062px;height:64px;background:#f1f4fa;"></div>
<div class="a" style="left:301px;top:813px;width:1062px;height:1px;background:#d3dae6;"></div>
<div class="a" style="left:305px;top:754px;width:16px;height:16px;border:1px solid #98a2b3;border-radius:4px;background:#fff;"></div>
<svg class="a" style="left:330px;top:756px;" width="14" height="14" viewBox="0 0 14 14" fill="none"><path d="M3.3 9.5L10.6 2.3M8.7 1.5H11.4V4.2M2.5 7.6V10.3H5.2" stroke="#343741" stroke-width="1"/></svg>
<div class="t m" style="left:353px;top:754.5px;font-size:12.05px;line-height:19px;color:#343741;">Aug 6, 2025 @ 09:45:54.000</div>
<div class="t m" style="left:565px;top:754.5px;font-size:12.05px;line-height:19px;color:#343741;"><b>@timestamp</b> Aug 6, 2025 @ 09:45:54.000 <b>agent.ephemeral_id</b> dd9adf1e-afae-43a6-ba23-d07d7e88859c <b>agent.id</b> 8f02c7</div>
<div class="t m" style="left:565px;top:773.5px;font-size:12.05px;line-height:19px;color:#343741;">d9-2654-47a5-9999-9a496662498f <b>agent.name</b> tartarus-dvwa <b>agent.type</b> filebeat <b>agent.version</b> 8.17.</div>
<div class="t m" style="left:565px;top:792.5px;font-size:12.05px;line-height:19px;color:#343741;">1 <b>data_stream.dataset</b> modsecurity.auditlog <b>data_stream.namespace</b> default <b>data_stream.type</b> log…</div>
<div class="a" style="left:301px;top:814px;width:1062px;height:64px;background:#fff;"></div>
<div class="a" style="left:301px;top:878px;width:1062px;height:1px;background:#d3dae6;"></div>
<div class="a" style="left:305px;top:819px;width:16px;height:16px;border:1px solid #98a2b3;border-radius:4px;background:#fff;"></div>
<svg class="a" style="left:330px;top:821px;" width="14" height="14" viewBox="0 0 14 14" fill="none"><path d="M3.3 9.5L10.6 2.3M8.7 1.5H11.4V4.2M2.5 7.6V10.3H5.2" stroke="#343741" stroke-width="1"/></svg>
<div class="t m" style="left:353px;top:819.5px;font-size:12.05px;line-height:19px;color:#343741;">Aug 6, 2025 @ 09:45:24.000</div>
<div class="t m" style="left:565px;top:819.5px;font-size:12.05px;line-height:19px;color:#343741;"><b>@timestamp</b> Aug 6, 2025 @ 09:45:24.000 <b>agent.ephemeral_id</b> dd9adf1e-afae-43a6-ba23-d07d7e88859c <b>agent.id</b> 8f02c7</div>
<div class="t m" style="left:565px;top:838.5px;font-size:12.05px;line-height:19px;color:#343741;">d9-2654-47a5-9999-9a496662498f <b>agent.name</b> tartarus-dvwa <b>agent.type</b> filebeat <b>agent.version</b> 8.17.</div>
<div class="t m" style="left:565px;top:857.5px;font-size:12.05px;line-height:19px;color:#343741;">1 <b>data_stream.dataset</b> modsecurity.auditlog <b>data_stream.namespace</b> default <b>data_stream.type</b> log…</div>
<div class="a" style="left:301px;top:879px;width:1062px;height:64px;background:#f1f4fa;"></div>
<div class="a" style="left:301px;top:943px;width:1062px;height:1px;background:#d3dae6;"></div>
<div class="a" style="left:305px;top:884px;width:16px;height:16px;border:1px solid #98a2b3;border-radius:4px;background:#fff;"></div>
<svg class="a" style="left:330px;top:886px;" width="14" height="14" viewBox="0 0 14 14" fill="none"><path d="M3.3 9.5L10.6 2.3M8.7 1.5H11.4V4.2M2.5 7.6V10.3H5.2" stroke="#343741" stroke-width="1"/></svg>
<div class="t m" style="left:353px;top:884.5px;font-size:12.05px;line-height:19px;color:#343741;">Aug 6, 2025 @ 09:44:54.000</div>
<div class="t m" style="left:565px;top:884.5px;font-size:12.05px;line-height:19px;color:#343741;"><b>@timestamp</b> Aug 6, 2025 @ 09:44:54.000 <b>agent.ephemeral_id</b> dd9adf1e-afae-43a6-ba23-d07d7e88859c <b>agent.id</b> 8f02c7</div>
<div class="t m" style="left:565px;top:903.5px;font-size:12.05px;line-height:19px;color:#343741;">d9-2654-47a5-9999-9a496662498f <b>agent.name</b> tartarus-dvwa <b>agent.type</b> filebeat <b>agent.version</b> 8.17.</div>
<div class="t m" style="left:565px;top:922.5px;font-size:12.05px;line-height:19px;color:#343741;">1 <b>data_stream.dataset</b> modsecurity.auditlog <b>data_stream.namespace</b> default <b>data_stream.type</b> log…</div>
<div class="a" style="left:301px;top:944px;width:1062px;height:64px;background:#fff;"></div>
<div class="a" style="left:301px;top:1008px;width:1062px;height:1px;background:#d3dae6;"></div>
<div class="a" style="left:305px;top:949px;width:16px;height:16px;border:1px solid #98a2b3;border-radius:4px;background:#fff;"></div>
<svg class="a" style="left:330px;top:951px;" width="14" height="14" viewBox="0 0 14 14" fill="none"><path d="M3.3 9.5L10.6 2.3M8.7 1.5H11.4V4.2M2.5 7.6V10.3H5.2" stroke="#343741" stroke-width="1"/></svg>
<div class="t m" style="left:353px;top:949.5px;font-size:12.05px;line-height:19px;color:#343741;">Aug 6, 2025 @ 09:44:24.000</div>
<div class="t m" style="left:565px;top:949.5px;font-size:12.05px;line-height:19px;color:#343741;"><b>@timestamp</b> Aug 6, 2025 @ 09:44:24.000 <b>agent.ephemeral_id</b> dd9adf1e-afae-43a6-ba23-d07d7e88859c <b>agent.id</b> 8f02c7</div>
<div class="t m" style="left:565px;top:968.5px;font-size:12.05px;line-height:19px;color:#343741;">d9-2654-47a5-9999-9a496662498f <b>agent.name</b> tartarus-dvwa <b>agent.type</b> filebeat <b>agent.version</b> 8.17.</div>
<div class="t m" style="left:565px;top:987.5px;font-size:12.05px;line-height:19px;color:#343741;">1 <b>data_stream.dataset</b> modsecurity.auditlog <b>data_stream.namespace</b> default <b>data_stream.type</b> log…</div>
<svg class="a" style="left:1362px;top:398px;" width="12" height="8" viewBox="0 0 12 8" fill="none"><path d="M3 6L6 3L9 6Z" fill="#c7cdd6"/></svg>
<div class="a" style="left:1365px;top:410px;width:6px;height:188px;background:#a9afb9;border-radius:3px;"></div>
<div class="a" style="left:1373px;top:104px;width:544px;height:856px;background:#fff;border-left:2px solid #d3dae6;"></div>
<div class="a" style="left:1375px;top:104px;width:542px;height:7px;background:linear-gradient(#e3e5e9,rgba(255,255,255,0));"></div>
<div class="t " style="left:1391px;top:123.06px;font-size:16.57px;line-height:19.88px;color:#1a1c21;font-weight:700;">Document</div>
<svg class="a" style="left:1494px;top:126px;" width="14" height="12" viewBox="0 0 14 12" fill="none"><path d="M1.5 0.5V11.5M11.5 1L6.5 6L11.5 11" stroke="#98a2b3" stroke-width="1.3"/></svg>
<svg class="a" style="left:1519px;top:126px;" width="10" height="12" viewBox="0 0 10 12" fill="none"><path d="M8 1L3 6L8 11" stroke="#98a2b3" stroke-width="1.3"/></svg>
<div class="t " style="left:1544px;top:124.3px;font-size:14.5px;line-height:17.4px;color:#0077cc;font-weight:700;">1</div>
<div class="t " style="left:1559px;top:124.0px;font-size:15px;line-height:18.0px;color:#69707d;">of</div>
<div class="t " style="left:1580px;top:124.3px;font-size:14.5px;line-height:17.4px;color:#343741;font-weight:700;">30</div>
<svg class="a" style="left:1614px;top:126px;" width="10" height="12" viewBox="0 0 10 12" fill="none"><path d="M2 1L7 6L2 11" stroke="#343741" stroke-width="1.4"/></svg>
<svg class="a" style="left:1636px;top:126px;" width="13" height="12" viewBox="0 0 13 12" fill="none"><path d="M1.5 1L6.5 6L1.5 11M11 0.5V11.5" stroke="#343741" stroke-width="1.4"/></svg>
<svg class="a" style="left:1890px;top:118px;" width="14" height="14" viewBox="0 0 14 14" fill="none"><path d="M1.5 1.5L12.5 12.5M12.5 1.5L1.5 12.5" stroke="#343741" stroke-width="1.2"/></svg>
<div class="t " style="left:1391px;top:160.23px;font-size:14.62px;line-height:17.54px;color:#343741;">Actions:</div>
<svg class="a" style="left:1456px;top:161px;" width="12" height="14" viewBox="0 0 12 14" fill="none"><path d="M1 0.8H7.5L11 4.3V13.2H1Z" stroke="#0077cc" stroke-width="1.1" stroke-linejoin="round"/><path d="M7.3 0.8V4.5H11M3.5 7.5H8.5M3.5 10H8.5" stroke="#0077cc" stroke-width="1"/></svg>
<div class="t " style="left:1476px;top:159.85px;font-size:15.24px;line-height:18.29px;color:#0061a6;-webkit-text-stroke:0.25px currentColor;">View single document</div>
<svg class="a" style="left:1639px;top:161px;" width="12" height="14" viewBox="0 0 12 14" fill="none"><path d="M1 0.8H7.5L11 4.3V13.2H1Z" stroke="#0077cc" stroke-width="1.1" stroke-linejoin="round"/><path d="M7.3 0.8V4.5H11M3.5 7.5H8.5M3.5 10H8.5" stroke="#0077cc" stroke-width="1"/></svg>
<div class="t " style="left:1656px;top:159.87px;font-size:15.22px;line-height:18.26px;color:#0061a6;-webkit-text-stroke:0.25px currentColor;">View surrounding documents</div>
<div class="a" style="left:1374px;top:200px;width:543px;height:1px;background:#d3dae6;"></div>
<div class="t " style="left:1396px;top:225.67px;font-size:12.22px;line-height:14.66px;color:#0077cc;font-weight:700;">Table</div>
<div class="t " style="left:1447px;top:225.73px;font-size:12.12px;line-height:14.54px;color:#1a1c21;font-weight:700;">JSON</div>
<div class="a" style="left:1391px;top:248px;width:509px;height:1px;background:#d3dae6;"></div>
<div class="a" style="left:1391px;top:247px;width:40px;height:2px;background:#0077cc;"></div>
<div class="a" style="left:1391px;top:257px;width:510px;height:32px;border:1px solid #d3dae6;border-radius:6px;background:#fbfcfd;overflow:hidden;"></div>
<div class="a" style="left:1844px;top:258px;width:56px;height:30px;background:#e9edf3;"></div>
<svg class="a" style="left:1399px;top:266px;" width="14" height="14" viewBox="0 0 14 14" fill="none"><circle cx="6" cy="6" r="4.8" stroke="#69707d" stroke-width="1.2"/><path d="M9.5 9.5L12.5 12.5" stroke="#69707d" stroke-width="1.2"/></svg>
<div class="t " style="left:1418px;top:265.2px;font-size:14.66px;line-height:17.59px;color:#8e949e;">Search field names or values</div>
<svg class="a" style="left:1854px;top:267px;" width="12" height="12" viewBox="0 0 12 12" fill="none"><path d="M1.5 3.5H10.5M3.5 6.3H8.5M5 9H7" stroke="#0077cc" stroke-width="1.2"/></svg>
<div class="a" style="left:1876px;top:265px;width:16px;height:16px;background:#e0e5ee;border-radius:3px;"></div>
<div class="t " style="left:1880px;top:265.9px;font-size:13.5px;line-height:16.2px;color:#1a1c21;">0</div>
<div class="a" style="left:1775px;top:297px;width:29px;height:16px;background:#e3e7ee;border-radius:8px;"></div>
<div class="a" style="left:1776px;top:298px;width:14px;height:14px;background:#e6eaf0;border:1px solid #69707d;border-radius:50%;"></div>
<div class="t " style="left:1812px;top:297.11px;font-size:14.82px;line-height:17.78px;color:#98a2b3;">Selected only</div>
<div class="t " style="left:1429px;top:328.44px;font-size:12.6px;line-height:15.12px;color:#343741;font-weight:700;">Field</div>
<div class="t " style="left:1582px;top:328.44px;font-size:12.6px;line-height:15.12px;color:#343741;font-weight:700;">Value</div>
<div class="a" style="left:1391px;top:349px;width:499px;height:1px;background:#d3dae6;"></div>
<div class="a" style="left:1390px;top:350px;width:501px;height:540px;overflow:hidden;"></div>
<div class="a" style="left:1391px;top:350px;width:499px;height:30px;background:#fff;"></div>
<div class="a" style="left:1391px;top:379px;width:499px;height:1px;background:#d3dae6;"></div>
<div class="a" style="left:1429px;top:356px;width:16px;height:16px;background:#eef3f9;border:1px solid #cfdfee;border-radius:3px;"></div>
<div class="t" style="left:1429px;top:356px;width:16px;height:16px;line-height:16px;text-align:center;font-size:11px;font-weight:700;font-style:italic;color:#3c6390;">k</div>
<div class="t " style="left:1453px;top:356.35px;font-size:12.75px;line-height:15.3px;color:#343741;">event.type</div>
<div class="t " style="left:1582px;top:357.16px;font-size:13.4px;line-height:16.08px;color:#1a1c21;">access</div>
<div class="a" style="left:1391px;top:380px;width:499px;height:30px;background:#f1f4fa;"></div>
<div class="a" style="left:1391px;top:409px;width:499px;height:1px;background:#d3dae6;"></div>
<div class="a" style="left:1429px;top:386px;width:16px;height:16px;background:#eef3f9;border:1px solid #cfdfee;border-radius:3px;"></div>
<div class="t" style="left:1429px;top:386px;width:16px;height:16px;line-height:16px;text-align:center;font-size:11px;font-weight:700;font-style:italic;color:#3c6390;">k</div>
<div class="t " style="left:1453px;top:386.35px;font-size:12.75px;line-height:15.3px;color:#343741;">host.architecture</div>
<div class="t " style="left:1582px;top:387.16px;font-size:13.4px;line-height:16.08px;color:#1a1c21;">x86_64</div>
<div class="a" style="left:1391px;top:410px;width:499px;height:30px;background:#fff;"></div>
<div class="a" style="left:1391px;top:439px;width:499px;height:1px;background:#d3dae6;"></div>
<div class="a" style="left:1429px;top:416px;width:16px;height:16px;background:#fdf3ec;border:1px solid #f5d5bd;border-radius:3px;"></div>
<svg class="a" style="left:1431px;top:418px;" width="12" height="12" viewBox="0 0 12 12" fill="none"><circle cx="6" cy="6" r="4.6" stroke="#8f5726" stroke-width="1.2"/><path d="M9.3 2.7A4.6 4.6 0 0 1 2.7 9.3Z" fill="#8f5726"/></svg>
<div class="t " style="left:1453px;top:416.35px;font-size:12.75px;line-height:15.3px;color:#343741;">host.containerized</div>
<div class="t " style="left:1582px;top:417.16px;font-size:13.4px;line-height:16.08px;color:#1a1c21;">false</div>
<div class="a" style="left:1391px;top:440px;width:499px;height:30px;background:#f1f4fa;"></div>
<div class="a" style="left:1391px;top:469px;width:499px;height:1px;background:#d3dae6;"></div>
<div class="a" style="left:1429px;top:446px;width:16px;height:16px;background:#eef3f9;border:1px solid #cfdfee;border-radius:3px;"></div>
<div class="t" style="left:1429px;top:446px;width:16px;height:16px;line-height:16px;text-align:center;font-size:11px;font-weight:700;font-style:italic;color:#3c6390;">k</div>
<div class="t " style="left:1453px;top:446.35px;font-size:12.75px;line-height:15.3px;color:#343741;">host.hostname</div>
<div class="t " style="left:1582px;top:447.16px;font-size:13.4px;line-height:16.08px;color:#1a1c21;">tartarus-dvwa</div>
<div class="a" style="left:1391px;top:470px;width:499px;height:30px;background:#fff;"></div>
<div class="a" style="left:1391px;top:499px;width:499px;height:1px;background:#d3dae6;"></div>
<div class="a" style="left:1429px;top:476px;width:16px;height:16px;background:#eef3f9;border:1px solid #cfdfee;border-radius:3px;"></div>
<div class="t" style="left:1429px;top:476px;width:16px;height:16px;line-height:16px;text-align:center;font-size:11px;font-weight:700;font-style:italic;color:#3c6390;">k</div>
<div class="t " style="left:1453px;top:476.35px;font-size:12.75px;line-height:15.3px;color:#343741;">host.id</div>
<div class="t " style="left:1582px;top:477.16px;font-size:13.4px;line-height:16.08px;color:#1a1c21;">28ef4de5ba3b43b8864e14bf1f5e28b9</div>
<div class="a" style="left:1391px;top:500px;width:499px;height:48px;background:#f1f4fa;"></div>
<div class="a" style="left:1391px;top:547px;width:499px;height:1px;background:#d3dae6;"></div>
<div class="a" style="left:1429px;top:506px;width:16px;height:16px;background:#fbe0dc;border:1px solid #f3c4bd;border-radius:3px;"></div>
<div class="a" style="left:1432px;top:509px;width:10px;height:10px;background:#b8423a;border-radius:2px;"></div>
<div class="t" style="left:1432px;top:509px;width:10px;height:10px;line-height:10px;text-align:center;font-size:7.5px;font-weight:700;color:#fff;letter-spacing:-0.3px;">IP</div>
<div class="t " style="left:1453px;top:506.35px;font-size:12.75px;line-height:15.3px;color:#343741;">host.ip</div>
<div class="t" style="left:1582px;top:507px;font-size:13.4px;line-height:17px;color:#1a1c21;"><span style="color:#c5cbd3">[</span>10.0.2.15<span style="color:#c5cbd3">,</span> fe80::a00:27ff:fecb:1a1d<span style="color:#c5cbd3">,</span> 192.168.56.7<br>1<span style="color:#c5cbd3">,</span> fe80::a00:27ff:fe48:555d<span style="color:#c5cbd3">]</span></div>
<div class="a" style="left:1391px;top:548px;width:499px;height:30px;background:#fff;"></div>
<div class="a" style="left:1391px;top:577px;width:499px;height:1px;background:#d3dae6;"></div>
<div class="a" style="left:1429px;top:554px;width:16px;height:16px;background:#eef3f9;border:1px solid #cfdfee;border-radius:3px;"></div>
<div class="t" style="left:1429px;top:554px;width:16px;height:16px;line-height:16px;text-align:center;font-size:11px;font-weight:700;font-style:italic;color:#3c6390;">k</div>
<div class="t " style="left:1453px;top:554.35px;font-size:12.75px;line-height:15.3px;color:#343741;">host.mac</div>
<div class="t" style="left:1582px;top:553.5px;font-size:14px;line-height:17px;color:#1a1c21;"><span style="color:#c5cbd3">[</span>08-00-27-48-55-5D<span style="color:#c5cbd3">,</span> 08-00-27-CB-1A-1D<span style="color:#c5cbd3">]</span></div>
<div class="a" style="left:1391px;top:578px;width:499px;height:30px;background:#f1f4fa;"></div>
<div class="a" style="left:1391px;top:607px;width:499px;height:1px;background:#d3dae6;"></div>
<div class="a" style="left:1429px;top:584px;width:16px;height:16px;background:#eef3f9;border:1px solid #cfdfee;border-radius:3px;"></div>
<div class="t" style="left:1429px;top:584px;width:16px;height:16px;line-height:16px;text-align:center;font-size:11px;font-weight:700;font-style:italic;color:#3c6390;">k</div>
<div class="t " style="left:1453px;top:584.35px;font-size:12.75px;line-height:15.3px;color:#343741;">host.name</div>
<div class="t " style="left:1582px;top:585.16px;font-size:13.4px;line-height:16.08px;color:#1a1c21;">tartarus-dvwa</div>
<div class="a" style="left:1391px;top:608px;width:499px;height:30px;background:#fff;"></div>
<div class="a" style="left:1391px;top:637px;width:499px;height:1px;background:#d3dae6;"></div>
<div class="a" style="left:1429px;top:614px;width:16px;height:16px;background:#eef3f9;border:1px solid #cfdfee;border-radius:3px;"></div>
<div class="t" style="left:1429px;top:614px;width:16px;height:16px;line-height:16px;text-align:center;font-size:11px;font-weight:700;font-style:italic;color:#3c6390;">k</div>
<div class="t " style="left:1453px;top:614.35px;font-size:12.75px;line-height:15.3px;color:#343741;">host.os.codename</div>
<div class="t " style="left:1582px;top:615.16px;font-size:13.4px;line-height:16.08px;color:#1a1c21;">focal</div>
<div class="a" style="left:1391px;top:638px;width:499px;height:30px;background:#f1f4fa;"></div>
<div class="a" style="left:1391px;top:667px;width:499px;height:1px;background:#d3dae6;"></div>
<div class="a" style="left:1429px;top:644px;width:16px;height:16px;background:#eef3f9;border:1px solid #cfdfee;border-radius:3px;"></div>
<div class="t" style="left:1429px;top:644px;width:16px;height:16px;line-height:16px;text-align:center;font-size:11px;font-weight:700;font-style:italic;color:#3c6390;">k</div>
<div class="t " style="left:1453px;top:644.35px;font-size:12.75px;line-height:15.3px;color:#343741;">host.os.family</div>
<div class="t " style="left:1582px;top:645.16px;font-size:13.4px;line-height:16.08px;color:#1a1c21;">debian</div>
<div class="a" style="left:1391px;top:668px;width:499px;height:30px;background:#fff;"></div>
<div class="a" style="left:1391px;top:697px;width:499px;height:1px;background:#d3dae6;"></div>
<div class="a" style="left:1429px;top:674px;width:16px;height:16px;background:#eef3f9;border:1px solid #cfdfee;border-radius:3px;"></div>
<div class="t" style="left:1429px;top:674px;width:16px;height:16px;line-height:16px;text-align:center;font-size:11px;font-weight:700;font-style:italic;color:#3c6390;">k</div>
<div class="t " style="left:1453px;top:674.35px;font-size:12.75px;line-height:15.3px;color:#343741;">host.os.kernel</div>
<div class="t " style="left:1582px;top:675.16px;font-size:13.4px;line-height:16.08px;color:#1a1c21;">5.4.0-189-generic</div>
<div class="a" style="left:1391px;top:698px;width:499px;height:30px;background:#f1f4fa;"></div>
<div class="a" style="left:1391px;top:727px;width:499px;height:1px;background:#d3dae6;"></div>
<div class="a" style="left:1429px;top:704px;width:16px;height:16px;background:#eef3f9;border:1px solid #cfdfee;border-radius:3px;"></div>
<div class="t" style="left:1429px;top:704px;width:16px;height:16px;line-height:16px;text-align:center;font-size:11px;font-weight:700;font-style:italic;color:#3c6390;">k</div>
<div class="t " style="left:1453px;top:704.35px;font-size:12.75px;line-height:15.3px;color:#343741;">host.os.name</div>
<div class="t " style="left:1582px;top:705.16px;font-size:13.4px;line-height:16.08px;color:#1a1c21;">Ubuntu</div>
<div class="a" style="left:1391px;top:728px;width:499px;height:30px;background:#fff;"></div>
<div class="a" style="left:1391px;top:757px;width:499px;height:1px;background:#d3dae6;"></div>
<div class="a" style="left:1429px;top:734px;width:16px;height:16px;background:#eef3f9;border:1px solid #cfdfee;border-radius:3px;"></div>
<div class="t" style="left:1429px;top:734px;width:16px;height:16px;line-height:16px;text-align:center;font-size:11px;font-weight:700;font-style:italic;color:#3c6390;">k</div>
<div class="t " style="left:1453px;top:734.35px;font-size:12.75px;line-height:15.3px;color:#343741;">host.os.platform</div>
<div class="t " style="left:1582px;top:735.16px;font-size:13.4px;line-height:16.08px;color:#1a1c21;">ubuntu</div>
<div class="a" style="left:1391px;top:758px;width:499px;height:30px;background:#f1f4fa;"></div>
<div class="a" style="left:1391px;top:787px;width:499px;height:1px;background:#d3dae6;"></div>
<div class="a" style="left:1429px;top:764px;width:16px;height:16px;background:#eef3f9;border:1px solid #cfdfee;border-radius:3px;"></div>
<div class="t" style="left:1429px;top:764px;width:16px;height:16px;line-height:16px;text-align:center;font-size:11px;font-weight:700;font-style:italic;color:#3c6390;">k</div>
<div class="t " style="left:1453px;top:764.35px;font-size:12.75px;line-height:15.3px;color:#343741;">host.os.type</div>
<div class="t " style="left:1582px;top:765.16px;font-size:13.4px;line-height:16.08px;color:#1a1c21;">linux</div>
<div class="a" style="left:1391px;top:788px;width:499px;height:30px;background:#fff;"></div>
<div class="a" style="left:1391px;top:817px;width:499px;height:1px;background:#d3dae6;"></div>
<div class="a" style="left:1429px;top:794px;width:16px;height:16px;background:#eef3f9;border:1px solid #cfdfee;border-radius:3px;"></div>
<div class="t" style="left:1429px;top:794px;width:16px;height:16px;line-height:16px;text-align:center;font-size:11px;font-weight:700;font-style:italic;color:#3c6390;">k</div>
<div class="t " style="left:1453px;top:794.35px;font-size:12.75px;line-height:15.3px;color:#343741;">host.os.version</div>
<div class="t " style="left:1582px;top:795.16px;font-size:13.4px;line-height:16.08px;color:#1a1c21;">20.04.6 LTS (Focal Fossa)</div>
<div class="a" style="left:1391px;top:818px;width:499px;height:44px;background:#f1f4fa;"></div>
<div class="a" style="left:1391px;top:861px;width:499px;height:1px;background:#d3dae6;"></div>
<div class="a" style="left:1429px;top:824px;width:16px;height:16px;background:#eef3f9;border:1px solid #cfdfee;border-radius:3px;"></div>
<div class="t" style="left:1429px;top:824px;width:16px;height:16px;line-height:16px;text-align:center;font-size:11px;font-weight:700;font-style:italic;color:#3c6390;">k</div>
<div class="t " style="left:1453px;top:824.23px;font-size:12.95px;line-height:15.54px;color:#343741;">http.request.metho</div>
<div class="t " style="left:1453px;top:842.35px;font-size:12.75px;line-height:15.3px;color:#343741;">d</div>
<div class="t " style="left:1582px;top:825.16px;font-size:13.4px;line-height:16.08px;color:#1a1c21;">GET</div>
<div class="a" style="left:1391px;top:862px;width:499px;height:28px;background:#fff;"></div>
<div class="a" style="left:1429px;top:868px;width:16px;height:16px;background:#eef3f9;border:1px solid #cfdfee;border-radius:3px;"></div>
<div class="t" style="left:1429px;top:868px;width:16px;height:16px;line-height:16px;text-align:center;font-size:11px;font-weight:700;font-style:italic;color:#3c6390;">k</div>
<div class="t " style="left:1453px;top:868.21px;font-size:12.99px;line-height:15.59px;color:#343741;">http.response.bod</div>
<div class="a" style="left:1587px;top:871px;width:13px;height:13px;border:1.2px solid #0077cc;border-radius:2px;"></div>
<svg class="a" style="left:1587px;top:871px;" width="13" height="13" viewBox="0 0 13 13" fill="none"><path d="M6.5 3V10M3 6.5H10" stroke="#0077cc" stroke-width="1.2"/></svg>
<div class="t " style="left:1615px;top:870.09px;font-size:13.19px;line-height:15.83px;color:#1a1c21;">127.0.0.1</div>
<div class="a" style="left:1890px;top:322px;width:1px;height:568px;background:#e3e7ee;"></div>
<svg class="a" style="left:1889px;top:325px;" width="12" height="8" viewBox="0 0 12 8" fill="none"><path d="M3 6L6 3L9 6Z" fill="#c7cdd6"/></svg>
<div class="a" style="left:1893px;top:333px;width:6px;height:300px;background:#a9afb9;border-radius:3px;"></div>
<svg class="a" style="left:1889px;top:882px;" width="12" height="8" viewBox="0 0 12 8" fill="none"><path d="M3 2L6 5L9 2Z" fill="#c7cdd6"/></svg>
<div class="a" style="left:1391px;top:890px;width:510px;height:1px;background:#d3dae6;"></div>
<div class="t " style="left:1399px;top:904.42px;font-size:12.63px;line-height:15.16px;color:#343741;">Rows per page: 25</div>
<svg class="a" style="left:1512px;top:906px;" width="13" height="9" viewBox="0 0 13 9" fill="none"><path d="M1.5 1.5L6.5 6.5L11.5 1.5" stroke="#343741" stroke-width="1.3"/></svg>
<svg class="a" style="left:1788px;top:903px;" width="10" height="15" viewBox="0 0 10 15" fill="none"><path d="M8 1.5L2.5 7.5L8 13.5" stroke="#343741" stroke-width="1.4"/></svg>
<div class="t " style="left:1812px;top:903.3px;font-size:14.5px;line-height:17.4px;color:#343741;">1</div>
<div class="t " style="left:1835px;top:903.3px;font-size:14.5px;line-height:17.4px;color:#0077cc;font-weight:700;text-decoration:underline;">2</div>
<div class="t " style="left:1860px;top:903.3px;font-size:14.5px;line-height:17.4px;color:#343741;">3</div>
<svg class="a" style="left:1883px;top:903px;" width="10" height="15" viewBox="0 0 10 15" fill="none"><path d="M2 1.5L7.5 7.5L2 13.5" stroke="#343741" stroke-width="1.4"/></svg>
<div class="a" style="left:1374px;top:943px;width:543px;height:17px;background:#f5f7fa;"></div>
</body></html>
